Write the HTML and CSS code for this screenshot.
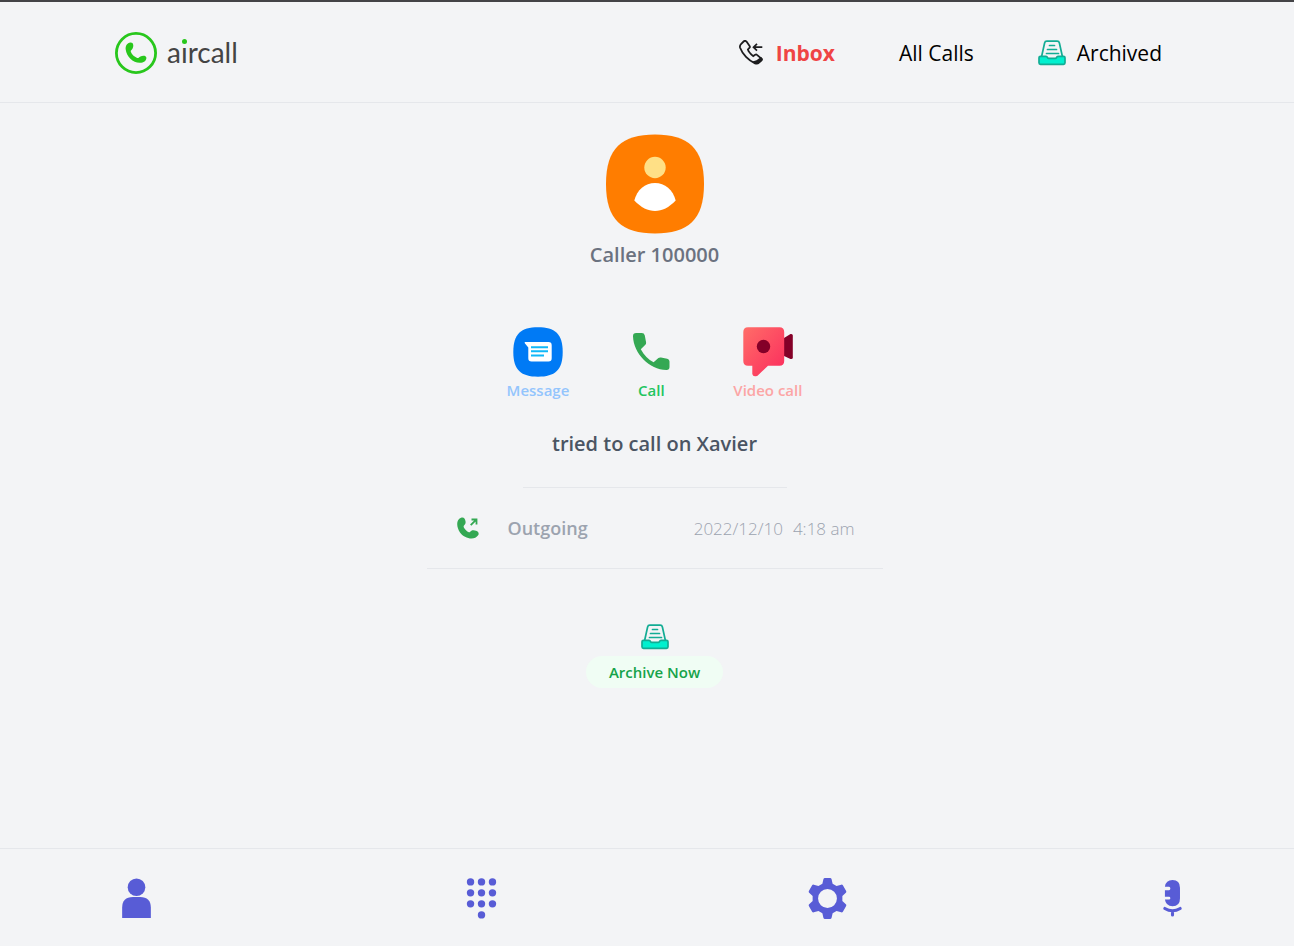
FILE: index.html
```html
<!DOCTYPE html>
<html lang="en">
<head>
<meta charset="utf-8">
<meta name="viewport" content="width=device-width, initial-scale=1">
<title>Aircall</title>
<link rel="stylesheet" href="styles.css">
</head>
<body>
<svg class="defs" aria-hidden="true">
  <symbol id="tray" viewBox="0 0 28 26">
    <path d="M3.500 17 6.600 3Q7 1.200 8.800 1.200h10.400Q21 1.200 21.400 3l3.100 14" fill="none" stroke="#12ac94" stroke-width="1.700"/>
    <path d="M2.500 16.300H8q1 0 1.300 1t1.300 1h6.800q1 0 1.300-1t1.300-1h5.500q1.500 0 1.500 1.500v5q0 1.500-1.500 1.500h-23Q1 24.300 1 22.800v-5q0-1.500 1.500-1.500z" fill="#00f0cf" stroke="#12ac94" stroke-width="1.700"/>
    <path d="M11.500 5.500h5M9.500 9.500h9M8.500 13.500h12" stroke="#12ac94" stroke-width="1.700" stroke-linecap="round"/>
  </symbol>
</svg>
<header class="header">
  <a class="brand" href="#" aria-label="aircall">
    <svg class="brand-mark" viewBox="0 0 42 42" aria-hidden="true">
      <circle cx="21" cy="21" r="19.600" fill="none" stroke="#28c71c" stroke-width="2.800"/>
      <path d="M15.500 10.500C12 11 10.300 14 10.700 17.400 11.500 24.500 18 31 25 30.800c3.500 0 6.500-2 6.400-5-.200-2.500-3.600-2.600-6-1.400-1.400.700-1.900 2-3.200 1.500-3-1.200-5.400-3.400-6.400-6.200-.400-1.300 1-1.800 1.800-3.200 1.300-2.300 1-6.200-2.100-6z" fill="#28c71c"/>
    </svg>
    <span class="brand-name">a<span class="brand-i">ı</span>rcall</span>
  </a>
  <nav class="nav">
    <a class="nav-link active" href="#">
      <svg class="icon-inbox" viewBox="0 0 24 25" aria-hidden="true">
        <path d="M7.500 1.600 10.600 6q.700 1-.200 1.900L8.900 9.400q.900 2.900 5.300 6.700l2-1.400q1-.600 1.800.200l4.400 3.700q1 1-.100 2L20 22.700q-1.600 1.500-4 .600C9.500 20.600 3.500 14.200 1.100 7.800Q.500 5.600 2 4.100L4.600 1.500Q6.200 0 7.500 1.600z" fill="none" stroke="#1d1d1f" stroke-width="1.800"/>
        <path d="m13.500 21.500 4-1.200 4.600-3.300q2.800 2.300.6 3.700l-2.500 2.400Q17.500 25.500 13.500 21.500z" fill="#1d1d1f"/>
        <path d="M23.300 7.200h-8.800m3.500-3.400-3.500 3.400 3.500 3.400" fill="none" stroke="#1d1d1f" stroke-width="1.700"/>
      </svg>
      Inbox
    </a>
    <a class="nav-link" href="#">All Calls</a>
    <a class="nav-link" href="#"><svg class="icon-tray" aria-hidden="true"><use href="#tray"/></svg>Archived</a>
  </nav>
</header>
<main class="main">
  <svg class="avatar" viewBox="0 0 100 100" aria-hidden="true">
    <path d="M50 .5C83 .5 99 14 99 50S83 99.500 50 99.500 1 86 1 50 17 .5 50 .5z" fill="#ff7d00"/>
    <circle cx="50" cy="33.500" r="10.700" fill="#ffe086"/>
    <path d="M29.300 66.500C32 56 40 49 50 49s18 7 20.700 17.500C64 73.500 57 77 50 77s-14-3.500-20.700-10.500z" fill="#fff"/>
  </svg>
  <h1 class="caller">Caller 100000</h1>
  <div class="actions">
    <button class="action message" type="button">
      <svg class="action-icon" viewBox="0 0 50 50" aria-hidden="true">
        <path d="M25 .3C42 .3 49.700 7 49.700 25S42 49.700 25 49.700.3 43 .3 25 8 .3 25 .3z" fill="#007af5"/>
        <path d="M12 15h23.500q3.200 0 3.200 3.200v13.100q0 3.200-3.200 3.200h-17q-3.200 0-3.200-3.200V20.500l-3.500-4.300Q11.300 15.300 12 15z" fill="#fff"/>
        <path d="M18 20.300h17M18 24.300h17M18 28.500h13" stroke="#10b8f8" stroke-width="2"/>
      </svg>
      Message
    </button>
    <button class="action call" type="button">
      <svg class="action-icon narrow" viewBox="0 0 40 50" aria-hidden="true">
        <path d="M5.200 6h5.600q2.400 0 3 2.400l1.300 7q.2 1.600-1 2.700l-4.300 4.200c3.300 6 7.500 10.200 12.800 13l4.800-4.200q1-.9 2.600-.6l6.200 1.200q2.300.5 2.300 2.800v5.400q0 2.900-3 3C18.500 43 2.500 26.500 2 9.200 2 7 3 6 5.200 6z" fill="#34a853"/>
      </svg>
      Call
    </button>
    <button class="action video" type="button">
      <svg class="action-icon" viewBox="0 0 50 50" aria-hidden="true">
        <defs><linearGradient id="rose" x1="0" y1="0" x2="1" y2="1"><stop stop-color="#ff6d68"/><stop offset="1" stop-color="#fb2b5d"/></linearGradient></defs>
        <path d="m41 11 6.500-4q2.300-.5 2.300 1.500v22q0 2-2.300 1.500L41 29z" fill="#840028"/>
        <path d="M5 .3h31.500q4.700 0 4.700 4.700v29q0 4.700-4.700 4.700H25L14.500 48.700Q10 50.500 9.300 47v-8.300H5Q.3 38.700.3 34V5Q.3.3 5 .3z" fill="url(#rose)"/>
        <circle cx="20.500" cy="19.500" r="6.700" fill="#840028"/>
      </svg>
      Video call
    </button>
  </div>
  <h2 class="summary">tried to call on Xavier</h2>
  <hr class="divider">
  <section class="record">
    <svg class="icon-outgoing" viewBox="0 0 22 22" aria-hidden="true">
      <path d="M4 .8C6.800-.2 8 1.800 8.500 4.200c.400 2-.300 3-1.500 4.200-.700.800-.4 1.900.5 3s2.500 2.900 3.900 3.600 1.700-.4 3-1.300c1.700-1 3.500-.4 5.300.4 2 .900 2.300 2.500 1.600 4C17 24.500 7 21 3 15.500-.5 10.500-1.300 2.800 4 .8z" fill="#34a853"/>
      <path d="m13.700 8.200 5.300-5.300M14.500 2.500h5v5" fill="none" stroke="#34a853" stroke-width="1.800"/>
    </svg>
    <span class="direction">Outgoing</span>
    <span class="when"><time>2022/12/10</time><time>4:18 am</time></span>
  </section>
  <svg class="icon-tray archive-icon" aria-hidden="true"><use href="#tray"/></svg>
  <button class="archive" type="button">Archive Now</button>
</main>
<footer class="footer">
  <button class="tab" type="button" aria-label="Contacts">
    <svg viewBox="0 0 40 40"><circle cx="20" cy="9" r="8.600"/><path d="M6 39V29q0-10.500 10.500-10.500h7Q34 18.500 34 29v10z"/></svg>
  </button>
  <button class="tab" type="button" aria-label="Keypad">
    <svg viewBox="0 0 40 40"><circle cx="9.300" cy="3.800" r="3.600"/><circle cx="20" cy="3.800" r="3.600"/><circle cx="30.700" cy="3.800" r="3.600"/><circle cx="9.300" cy="14.500" r="3.600"/><circle cx="20" cy="14.500" r="3.600"/><circle cx="30.700" cy="14.500" r="3.600"/><circle cx="9.300" cy="25.200" r="3.600"/><circle cx="20" cy="25.200" r="3.600"/><circle cx="30.700" cy="25.200" r="3.600"/><circle cx="20" cy="36" r="3.600"/></svg>
  </button>
  <button class="tab" type="button" aria-label="Settings">
    <svg viewBox="0 0 40 40"><path fill-rule="evenodd" d="M17.500 0h5q1.200 0 1.500 1.200l1 4.500 3.800 2.200 4.600-1.400q1-.3 1.600.6l3.200 5.500q.5 1-.3 1.700L34.500 17.600v4.800l3.400 3.300q.8.700.3 1.700L35 32.900q-.6.900-1.600.6l-4.600-1.400L25 34.300l-1 4.500Q23.700 40 22.500 40h-5q-1.200 0-1.500-1.200l-1-4.500-3.800-2.200-4.600 1.400q-1 .3-1.600-.6l-3.200-5.500q-.5-1 .3-1.700l3.400-3.300v-4.800l-3.400-3.300q-.8-.7-.3-1.700L5 7.100q.6-.9 1.600-.6l4.600 1.400L15 5.700l1-4.500Q16.300 0 17.500 0zM20 10.800a9.200 9.200 0 1 0 0 18.400 9.200 9.200 0 0 0 0-18.400z"/></svg>
  </button>
  <button class="tab" type="button" aria-label="Microphone">
    <svg viewBox="0 0 40 40"><path d="M12.600 8.500Q13.500 2 20 2q7.300 0 7.300 7.500V20q0 7.500-7.300 7.500-6.500 0-7.400-6.500h4q1.300 0 1.300-1.300t-1.300-1.300h-4V12h4q1.300 0 1.300-1.700t-1.300-1.800z"/><path d="M12.500 29.700q7.500 4.600 15 0M20 32v4" fill="none" stroke="#585cd6" stroke-width="3" stroke-linecap="round"/></svg>
  </button>
</footer>
</body>
</html>
```
FILE: styles.css
```css
* { box-sizing: border-box; }
body {
  margin: 0;
  min-height: 100vh;
  display: flex;
  flex-direction: column;
  border-top: 2px solid #444447;
  background: #f3f4f6;
  color: #000;
  font-family: "Open Sans", "Noto Sans", sans-serif;
}
svg { display: block; flex: none; }
button { border: 0; padding: 0; background: none; font: inherit; cursor: pointer; }
a { color: inherit; text-decoration: none; }
.defs { position: absolute; width: 0; height: 0; }

.header {
  display: flex;
  align-items: center;
  justify-content: space-between;
  height: 101px;
  padding: 1px 132px 0 115px;
  border-bottom: 1px solid #e5e7eb;
}
.brand { display: flex; align-items: center; gap: 10px; }
.brand-mark { width: 42px; height: 42px; }
.brand-name { padding-bottom: 2px; font: 400 28px/38px Lato, sans-serif; color: #444; }
.brand-i { position: relative; }
.brand-i::before {
  content: "";
  position: absolute;
  top: 4px;
  left: 1px;
  width: 5px;
  height: 5px;
  border-radius: 50%;
  background: #28c71c;
}
.nav { display: flex; align-items: center; gap: 64px; }
.nav-link { display: flex; align-items: center; gap: 11px; font-size: 21px; line-height: 32px; }
.nav-link.active { gap: 13px; color: #ef4444; font-weight: 700; }
.icon-inbox { width: 24px; height: 25px; }
.icon-tray { width: 28px; height: 26px; }

.main {
  flex: 1;
  display: flex;
  flex-direction: column;
  align-items: center;
  padding: 31px 0 32px 15px;
}
.avatar { width: 100px; height: 100px; }
.caller, .summary { margin: 5px 0 0; font-size: 20px; line-height: 32px; font-weight: 600; color: #6b7280; }
.actions { display: flex; gap: 62px; margin-top: 56px; }
.action { display: flex; flex-direction: column; align-items: center; font-size: 15px; line-height: 24px; font-weight: 600; }
.action-icon { width: 50px; height: 50px; margin-bottom: 1px; }
.action-icon.narrow { width: 40px; }
.message { color: #93c5fd; }
.call { color: #22c55e; }
.video { color: #fca5a5; }
.summary { margin-top: 26px; color: #4b5563; }
.divider { width: 264px; margin: 27px 0 0; border: 0; border-top: 1px solid #e5e7eb; }
.record {
  display: flex;
  align-items: center;
  width: 100%;
  max-width: 456px;
  height: 81px;
  padding: 0 28px 0 30px;
  border-bottom: 1px solid #e5e7eb;
  font-size: 18px;
  color: #9ca3af;
}
.icon-outgoing { width: 22px; height: 22px; }
.direction { margin-left: 29px; font-weight: 600; }
.when { display: flex; gap: 10px; margin-left: auto; font-size: 17px; font-weight: 300; }
.archive-icon { margin-top: 55px; }
.archive {
  margin-top: 6px;
  padding: 0 23px;
  border-radius: 16px;
  background: #f0fdf4;
  color: #16a34a;
  font-size: 15px;
  line-height: 32px;
  font-weight: 600;
}

.footer {
  display: flex;
  align-items: center;
  justify-content: space-between;
  height: 98px;
  padding: 2px 101px 0 116px;
  border-top: 1px solid #e5e7eb;
}
.tab svg { width: 41px; height: 41px; fill: #585cd6; }
```
